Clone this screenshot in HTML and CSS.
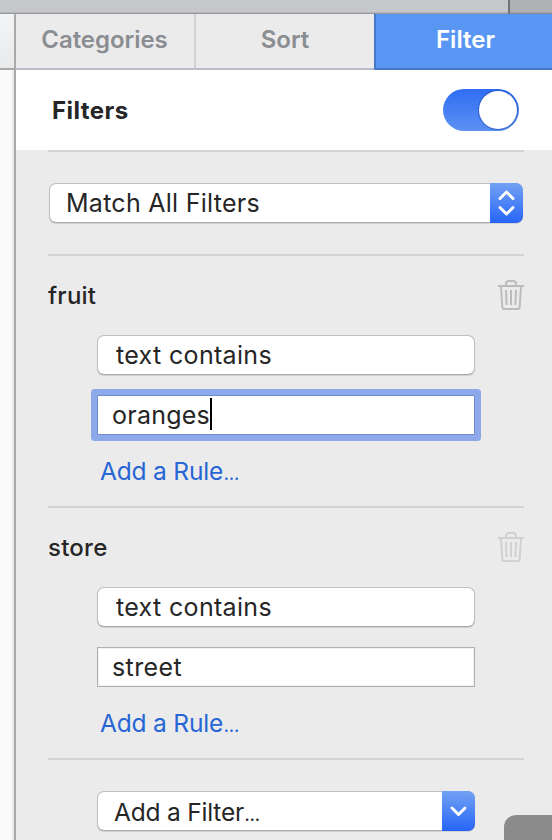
FILE: index.html
```
<!DOCTYPE html>
<html lang="en">
<head>
<meta charset="utf-8">
<title>Filters</title>
<link rel="stylesheet" href="styles.css">
</head>
<body>
<svg class="symbols" width="0" height="0" aria-hidden="true">
  <symbol id="trash" viewBox="0 0 26 30">
    <g fill="none" stroke="currentColor">
      <path d="M8 5V4q0-3 3-3h4q3 0 3 3v1" stroke-width="2"/>
      <path d="M0 6H26" stroke-width="2"/>
      <path d="M3 7l1.300 20q.1 2 2 2h13.400q1.900 0 2-2L23 7" stroke-width="2"/>
      <path d="M8 10l.6 15M13 10v15M18 10l-.6 15" stroke-width="2"/>
    </g>
  </symbol>
</svg>
<div class="window">
  <div class="titlebar"><div class="titlebar-end"></div></div>
  <div class="content">
    <div class="canvas"><div class="canvas-head"></div></div>
    <aside class="sidebar">
      <nav class="tabs">
        <div class="tab">Categories</div>
        <div class="tab">Sort</div>
        <div class="tab active">Filter</div>
      </nav>
      <header class="heading">
        <h1>Filters</h1>
        <div class="switch"><div class="knob"></div></div>
      </header>
      <section class="section match">
        <div class="popup wide">
          <span>Match All Filters</span>
          <div class="cap"><svg width="33" height="40" viewBox="0 0 33 40"><path d="M10 15.500l6.500-6.500 6.500 6.500M10 24.500l6.500 6.500 6.500-6.500"/></svg></div>
        </div>
      </section>
      <section class="section rule">
        <div class="rule-head"><h2>fruit</h2><svg class="trash"><use href="#trash"/></svg></div>
        <div class="popup"><span>text contains</span></div>
        <div class="field focused"><span>oranges</span><i class="caret"></i></div>
        <a class="add">Add a Rule<span class="dots">…</span></a>
      </section>
      <section class="section rule">
        <div class="rule-head"><h2>store</h2><svg class="trash faint"><use href="#trash"/></svg></div>
        <div class="popup"><span>text contains</span></div>
        <div class="field"><span>street</span></div>
        <a class="add">Add a Rule<span class="dots">…</span></a>
      </section>
      <section class="section last">
        <div class="popup add-filter">
          <span>Add a Filter<span class="dots">…</span></span>
          <div class="cap"><svg width="33" height="40" viewBox="0 0 33 40"><path d="M10 17l6.500 6.500 6.500-6.500"/></svg></div>
        </div>
      </section>
    </aside>
  </div>
  <div class="overlay"></div>
</div>
</body>
</html>
```
FILE: styles.css
```
* { box-sizing: border-box; }
body { margin: 0; font-family: Inter, "Liberation Sans", sans-serif; color: #262626; }
.symbols { position: absolute; }
.window { position: relative; width: 552px; height: 840px; overflow: hidden; background: #ebebeb; display: flex; flex-direction: column; }
.titlebar { height: 14px; flex: none; display: flex; justify-content: flex-end; background: linear-gradient(#c6c7cb 12px, #b4b5b8 12px 13px, #98999c 13px); }
.titlebar-end { width: 44px; height: 14px; border-left: 2px solid #727375; background: linear-gradient(#b0b1b4 12px, #a2a3a5 12px 13px, #8d8e90 13px); }
.content { flex: 1; display: flex; min-height: 0; }
.canvas { width: 16px; flex: none; border-right: 2px solid #a9a9a9; background: linear-gradient(90deg, #fafafa 12px, #ececec 12px); }
.canvas-head { height: 56px; border-bottom: 2px solid #a9a9a9; background: linear-gradient(#f3f4f5, #e8e9ea); }
.sidebar { flex: 1; min-width: 0; }
.tabs { height: 56px; display: flex; }
.tab { width: 180px; flex: none; display: flex; justify-content: center; border-bottom: 2px solid #b9bdc8; border-left: 2px solid #cfd1d6; color: #8a8d91; font-weight: 600; font-size: 24px; line-height: 52px; white-space: nowrap; }
.tab:first-child { width: 178px; border-left: 0; letter-spacing: -0.05px; padding-right: 1px; }
.tab.active { background: #5996f3; border-color: #4678c6; color: #fff; padding-left: 1px; }
.heading { height: 80px; background: #fff; display: flex; align-items: center; justify-content: space-between; padding: 0 33px 0 36px; }
h1, h2 { margin: 0; white-space: nowrap; }
h1 { padding-top: 2px; font-size: 24px; font-weight: 700; line-height: 30px; letter-spacing: 0.45px; }
.switch { width: 76px; height: 42px; border-radius: 21px; background: linear-gradient(#306df4, #5c91f3); display: flex; justify-content: flex-end; padding: 2px; }
.knob { width: 38px; height: 38px; border-radius: 50%; background: #fff; box-shadow: 0 0 1px 1px rgba(20,65,160,.5); }
.section { margin: 0 28px 0 32px; border-top: 2px solid #d3d3d3; }
.match { height: 104px; padding: 31px 1px 0; }
.rule { height: 252px; }
.rule-head { height: 79px; display: flex; align-items: center; justify-content: space-between; }
h2 { font-size: 24px; font-weight: 500; line-height: 30px; letter-spacing: 0.25px; }
.trash { width: 26px; height: 30px; margin-bottom: 1px; color: #bcbcbc; }
.trash.faint { color: #d1d1d1; }
.popup { width: 378px; height: 40px; margin-left: 49px; padding-left: 18px; display: flex; justify-content: space-between; background: #fff; background-clip: padding-box; border: 1px solid #c0c0c0; border-bottom-color: #a9a9a9; border-radius: 7px; box-shadow: 0 1px 1px rgba(0,0,0,.12); font-size: 25px; line-height: 38px; letter-spacing: 0.33px; white-space: nowrap; }
.popup.wide { width: 474px; margin-left: 0; padding-left: 16px; letter-spacing: 0.27px; }
.cap { width: 33px; height: 40px; margin: -1px -1px 0 0; border-radius: 0 7px 7px 0; background: linear-gradient(#72a2f4, #2765f6); }
.cap svg { display: block; fill: none; stroke: #fff; stroke-width: 2.9; stroke-linecap: round; stroke-linejoin: round; }
.field { width: 378px; height: 40px; margin: 20px 0 0 49px; padding-left: 14px; border: 1px solid #afafaf; background: #fff; box-shadow: inset 0 0 0 1px #f2f2f2; display: flex; font-size: 25px; line-height: 38px; letter-spacing: 0.4px; white-space: nowrap; }
.field.focused { border-color: #6f8bd0; border-radius: 1px; box-shadow: 0 0 0 6px #8da9ea; letter-spacing: 0.25px; }
.caret { width: 2px; height: 32px; margin-top: 2px; background: #000; }
.add { display: block; margin: 21px 0 0 52px; font-size: 24.5px; line-height: 31px; letter-spacing: -0.18px; color: #2866d5; white-space: nowrap; }
.dots { font-size: 17px; font-weight: 500; margin-left: 0.5px; letter-spacing: 0; }
.last { padding-top: 31px; }
.popup.add-filter { padding-left: 16px; font-size: 24.5px; line-height: 40px; letter-spacing: -0.2px; }
.overlay { position: absolute; right: 0; bottom: 0; width: 48px; height: 25px; background: #8b8b8b; border-top-left-radius: 12px; }
```
